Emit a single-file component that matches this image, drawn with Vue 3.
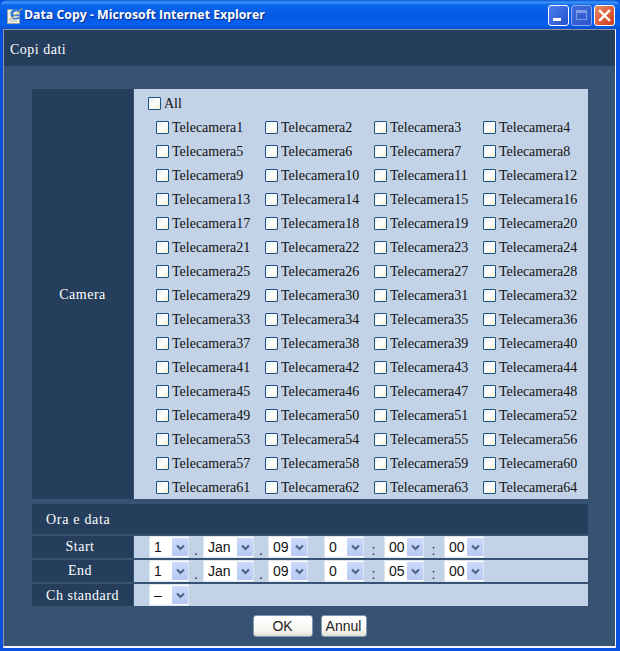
<script setup>
const cameras = Array.from({ length: 64 }, (_, i) => 'Telecamera' + (i + 1))
const dateRows = [
  { label: 'Start', min: '00' },
  { label: 'End', min: '05' }
]
</script>

<template>
  <div class="win">
    <div class="titlebar">
      <svg class="ie" width="17" height="17" viewBox="0 0 17 17">
        <path d="M1.5 2.5h9l3 3v11h-12z" fill="#f3efe0" stroke="#9aa3ad" stroke-width="1"/>
        <path d="M3 12h6M3 14h8" stroke="#b9c0c8" stroke-width="1"/>
        <path d="M13.6 7.6H6.8a3.4 3.4 0 0 1 6.2-1.8l1.6-1.2A5.4 5.4 0 1 0 14.4 10h-2.2a3.4 3.4 0 0 1-5.4-.8h6.8z" fill="#2f78d6"/>
        <path d="M3.6 12.4C6 11.4 11 7 14.6 2.4c.8-1 1.8-.8 1.2.6" fill="none" stroke="#dcb85a" stroke-width="1"/>
      </svg>
      <span class="title">Data Copy - Microsoft Internet Explorer</span>
      <div class="controls">
        <div class="wbtn min"><span class="dash"></span></div>
        <div class="wbtn max"><span class="square"></span></div>
        <div class="wbtn close">
          <svg width="13" height="13" viewBox="0 0 13 13"><path d="M2 2l9 9M11 2l-9 9" stroke="#fff" stroke-width="2.4" stroke-linecap="square"/></svg>
        </div>
      </div>
    </div>
    <div class="body">
      <div class="head">Copi dati</div>
      <div class="form">
        <div class="camera">
          <div class="cell-label lower">Camera</div>
          <div class="cam-panel">
            <label class="all"><span class="cb"></span><span class="t">All</span></label>
            <div class="cam-grid">
              <label v-for="c in cameras" :key="c" class="cam"><span class="cb"></span><span class="t">{{ c }}</span></label>
            </div>
          </div>
        </div>
        <div class="section">Ora e data</div>
        <div v-for="r in dateRows" :key="r.label" class="row">
          <div class="cell-label short">{{ r.label }}</div>
          <div class="fields">
            <div class="sel w40"><span>1</span><i class="arrow"><svg width="9" height="7" viewBox="0 0 9 7"><path d="M1 1.5l3.5 3.5 3.5-3.5" fill="none" stroke="#4d6185" stroke-width="2"/></svg></i></div>
            <span class="sep s1">.</span>
            <div class="sel w51"><span>Jan</span><i class="arrow"><svg width="9" height="7" viewBox="0 0 9 7"><path d="M1 1.5l3.5 3.5 3.5-3.5" fill="none" stroke="#4d6185" stroke-width="2"/></svg></i></div>
            <span class="sep s1">.</span>
            <div class="sel w40"><span>09</span><i class="arrow"><svg width="9" height="7" viewBox="0 0 9 7"><path d="M1 1.5l3.5 3.5 3.5-3.5" fill="none" stroke="#4d6185" stroke-width="2"/></svg></i></div>
            <span class="sp16"></span>
            <div class="sel w40"><span>0</span><i class="arrow"><svg width="9" height="7" viewBox="0 0 9 7"><path d="M1 1.5l3.5 3.5 3.5-3.5" fill="none" stroke="#4d6185" stroke-width="2"/></svg></i></div>
            <span class="sep s2">:</span>
            <div class="sel w40"><span>{{ r.min }}</span><i class="arrow"><svg width="9" height="7" viewBox="0 0 9 7"><path d="M1 1.5l3.5 3.5 3.5-3.5" fill="none" stroke="#4d6185" stroke-width="2"/></svg></i></div>
            <span class="sep s2">:</span>
            <div class="sel w40"><span>00</span><i class="arrow"><svg width="9" height="7" viewBox="0 0 9 7"><path d="M1 1.5l3.5 3.5 3.5-3.5" fill="none" stroke="#4d6185" stroke-width="2"/></svg></i></div>
          </div>
        </div>
        <div class="row">
          <div class="cell-label lower">Ch standard</div>
          <div class="fields">
            <div class="sel w40"><span>–</span><i class="arrow"><svg width="9" height="7" viewBox="0 0 9 7"><path d="M1 1.5l3.5 3.5 3.5-3.5" fill="none" stroke="#4d6185" stroke-width="2"/></svg></i></div>
          </div>
        </div>
      </div>
      <div class="actions">
        <button class="btn ok">OK</button>
        <button class="btn annul">Annul</button>
      </div>
    </div>
  </div>
</template>

<style>
html, body { margin: 0; padding: 0; background: #0a4fd8; overflow: hidden; }
</style>

<style scoped>
.win {
  width: 620px;
  height: 651px;
  display: flex;
  flex-direction: column;
  background: #0a50de;
  box-sizing: border-box;
  padding: 0 4px 3px 3px;
  font-family: "Liberation Serif", serif;
}
.titlebar {
  height: 29px;
  margin: 0 -4px 0 -3px;
  padding: 0 5px 0 6px;
  display: flex;
  align-items: center;
  flex: none;
  background: linear-gradient(180deg, #0a57d6 0%, #3d93f6 8%, #0a66ee 18%, #0559e3 55%, #0560ec 85%, #0a4fd0 100%);
  border-radius: 7px 7px 0 0;
}
.ie { flex: none; margin-top: 2px; }
.title {
  color: #fff;
  font: bold 12.3px "Open Sans", sans-serif;
  margin-left: 1px;
  text-shadow: 1px 1px 1px #0a2f90;
  white-space: nowrap;
}
.controls { margin-left: auto; display: flex; gap: 2px; padding-top: 1px; }
.wbtn {
  width: 19px;
  height: 19px;
  border: 1px solid #fff;
  border-radius: 3px;
  display: flex;
  align-items: center;
  justify-content: center;
}
.min { background: linear-gradient(135deg, #4d7ef0, #2450cc); }
.dash { width: 8px; height: 3px; background: #fff; margin-top: 8px; margin-right: 3px; }
.max { background: linear-gradient(135deg, #3c6de0, #2a56c8); border-color: #8ea8ec; }
.square { width: 11px; height: 10px; border: 1px solid #7e9ae2; border-top-width: 3px; box-sizing: border-box; }
.close { background: linear-gradient(135deg, #ec8a66, #cf3a16); }
.body {
  flex: 1;
  min-height: 0;
  background: #375374;
  border-left: 1px solid #8d96a8;
  border-right: 1px solid #f4f6f8;
  border-bottom: 2px solid #f4f6f8;
  border-top: 1px solid #8d96a8;
  display: flex;
  flex-direction: column;
  color: #fff;
}
.head {
  height: 36px;
  flex: none;
  background: #243e5b;
  display: flex;
  align-items: center;
  padding: 3px 0 0 6px;
  box-sizing: border-box;
  font-size: 14px;
  letter-spacing: 0.5px;
}
.form {
  margin: 23px 27px 0 28px;
  display: flex;
  flex-direction: column;
}
.camera {
  height: 410px;
  display: grid;
  grid-template-columns: 101px 454px;
  column-gap: 1px;
}
.cell-label {
  background: #243e5b;
  display: flex;
  align-items: center;
  justify-content: center;
  font-size: 14px;
  letter-spacing: 0.5px;
  white-space: nowrap;
}
.lower { padding-top: 2px; box-sizing: border-box; }
.short { padding-right: 5px; box-sizing: border-box; }
.cam-panel {
  background: #c3d3e7;
  color: #111;
  font-size: 14px;
}
.all {
  height: 26px;
  padding: 2px 0 0 14px;
  box-sizing: border-box;
  display: flex;
  align-items: center;
}
.cam-grid {
  display: grid;
  grid-template-columns: repeat(4, 109px);
  grid-auto-rows: 24px;
  padding-left: 22px;
}
.cam { display: flex; align-items: center; white-space: nowrap; }
.t { margin-top: 2px; }
.cb {
  width: 13px;
  height: 13px;
  box-sizing: border-box;
  border: 1px solid #1c5180;
  background: linear-gradient(135deg, #e6eef0 0%, #ffffff 50%, #f3ecd4 100%);
  margin-right: 3px;
  flex: none;
  border-radius: 1px;
}
.section {
  height: 30px;
  margin-top: 5px;
  background: #243e5b;
  display: flex;
  align-items: center;
  padding: 1px 0 0 14px;
  box-sizing: border-box;
  font-size: 14px;
  letter-spacing: 0.7px;
}
.row {
  height: 22px;
  margin-top: 2px;
  display: grid;
  grid-template-columns: 101px 454px;
  column-gap: 1px;
}
.fields {
  background: #c3d3e7;
  color: #111;
  display: flex;
  align-items: center;
  padding-left: 15px;
}
.sel {
  height: 22px;
  box-sizing: border-box;
  background: #fff;
  border: 1px solid #dfe6f0;
  display: flex;
  align-items: center;
  justify-content: space-between;
  font: 14px "Liberation Sans", sans-serif;
  padding-left: 4px;
  flex: none;
}
.sel span { white-space: nowrap; }
.w40 { width: 40px; }
.w51 { width: 51px; }
.arrow {
  width: 16px;
  height: 18px;
  background: linear-gradient(180deg, #cbd9fb, #b7c9f4);
  display: flex;
  align-items: center;
  justify-content: center;
  border-radius: 1px;
}
.sep {
  font: 14px "Liberation Sans", sans-serif;
  color: #223;
  text-align: center;
  align-self: flex-end;
  flex: none;
}
.s1 { width: 14px; }
.s2 { width: 19px; margin-right: 1px; }
.sp16 { width: 16px; flex: none; }
.actions {
  display: flex;
  justify-content: center;
  margin-top: 9px;
}
.btn {
  height: 22px;
  padding: 0;
  box-sizing: border-box;
  border: 1px solid #8497ad;
  border-radius: 3px;
  background: linear-gradient(180deg, #ffffff 0%, #f8f7f1 70%, #e2ded2 100%);
  font: 14px "Liberation Sans", sans-serif;
  color: #222;
}
.ok { width: 60px; margin-right: 8px; }
.annul { width: 46px; }
</style>
